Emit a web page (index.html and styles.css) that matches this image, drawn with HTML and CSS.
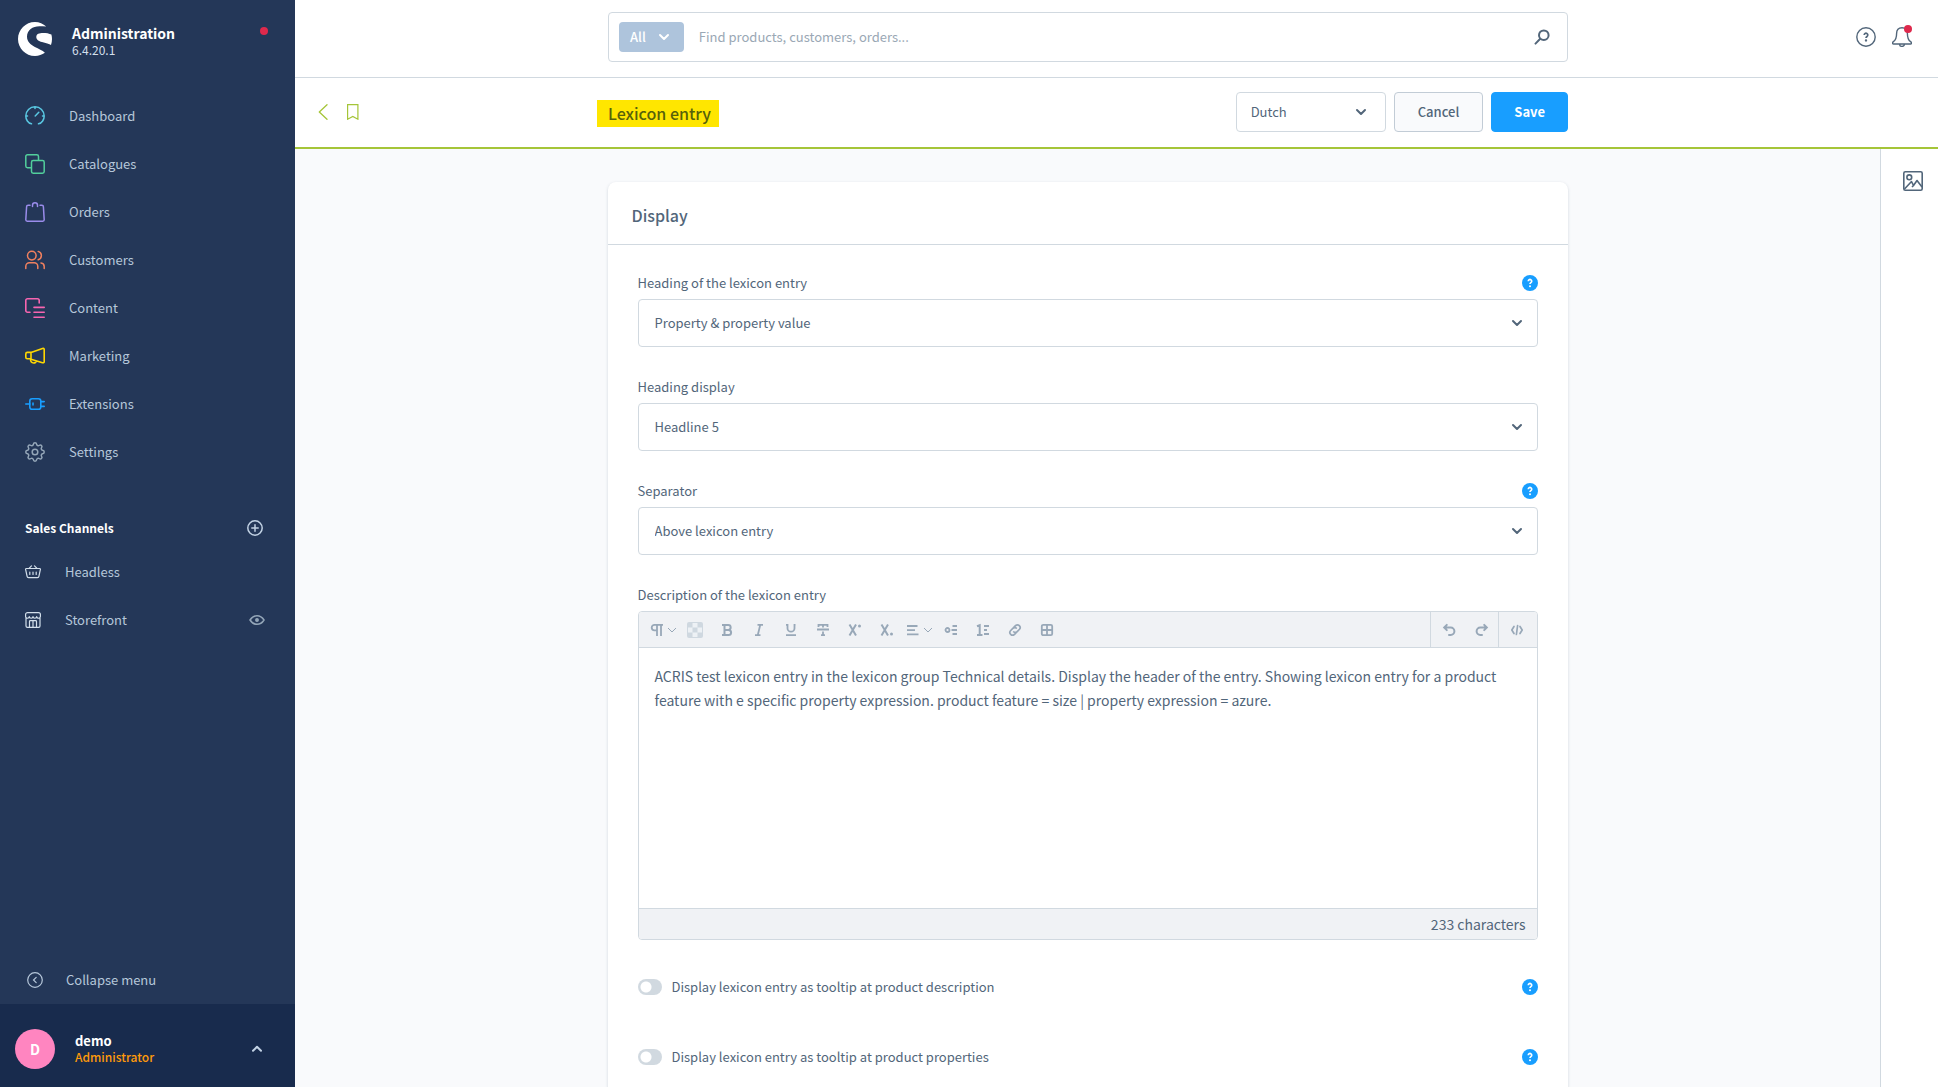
FILE: index.html
```html
<!DOCTYPE html>
<html lang="en">
<head>
<meta charset="utf-8">
<title>Lexicon entry | Administration</title>
<meta name="viewport" content="width=device-width, initial-scale=1">
<link rel="stylesheet" href="styles.css">
</head>
<body>
<svg class="sprite" aria-hidden="true">
  <symbol id="chevron" viewBox="0 0 16 16"><path d="M4 6l4 4 4-4" fill="none" stroke="currentColor" stroke-width="2" stroke-linecap="round" stroke-linejoin="round"/></symbol>
  <symbol id="chevron-thin" viewBox="0 0 10 16"><path d="M1 6l4 4 4-4" fill="none" stroke="currentColor" stroke-width="1"/></symbol>
  <symbol id="help" viewBox="0 0 16 16"><circle cx="8" cy="8" r="8" fill="#189eff"/><path d="M6.300 6.200a1.700 1.700 0 1 1 2.600 1.400c-.6.400-.9.600-.9 1.500" fill="none" stroke="#fff" stroke-width="1.700"/><circle cx="8" cy="11.200" r="1" fill="#fff"/></symbol>
</svg>
<div class="app">
  <aside class="sidebar">
    <header class="brand">
      <svg class="brand-logo" viewBox="0 0 34 34" fill="#fff"><path d="M28.200 4.600C25.300 1.800 21.300 0 17 0 7.600 0 0 7.600 0 17s7.600 17 17 17c3.700 0 7.100-1.200 9.900-3.200-2.300-2.700-6.500-4-10-5.900C12.500 22.700 9 20 9 14.600 9 8 14.500 4.300 21.500 4.200c2.400 0 4.700.1 6.700.4z"/><path d="M33 23.100c.7-1.900 1-4 1-6.100 0-1.600-.2-3-.6-4.400-2-1.300-5.400-1.700-8.300-1.700-3.800 0-6.800.9-6.800 4 0 2.700 2.400 4 5.700 5.100 3.500 1.100 7.600 2 9 3.100z"/></svg>
      <div class="brand-text">
        <strong class="brand-name">Administration</strong>
        <span class="brand-version">6.4.20.1</span>
      </div>
      <span class="brand-status"></span>
    </header>
    <nav class="nav" aria-label="Main">
      <a class="nav-item" href="#"><svg class="icon-20" viewBox="0 0 20 20" fill="none" stroke="#5ac8e2" stroke-width="1.500" stroke-linecap="round"><path d="M6.500 17.800C3 17.300.8 13.500.8 10a9.200 9.200 0 1 1 18.400 0c0 3.500-2.200 7.300-5.700 7.800M10 1v1.500M1 10h1.500M17.500 10H19M10.200 10l3.600-3.800"/></svg>Dashboard</a>
      <a class="nav-item" href="#"><svg class="icon-20" viewBox="0 0 20 20" fill="none" stroke="#52cf9c" stroke-width="1.500" stroke-linejoin="round"><path d="M13.500 6.500v-4A1.700 1.700 0 0 0 11.800.8H2.500A1.700 1.700 0 0 0 .8 2.500v9.600a1.700 1.700 0 0 0 1.700 1.700h4"/><rect x="6.500" y="6.500" width="12.700" height="12.700" rx="1.700"/></svg>Catalogues</a>
      <a class="nav-item" href="#"><svg class="icon-20" viewBox="0 0 20 20" fill="none" stroke="#9a8ceb" stroke-width="1.500" stroke-linecap="round" stroke-linejoin="round"><path d="M5 3.200H3.100c-.9 0-1.500.6-1.500 1.500L.8 17.800c0 .8.6 1.400 1.400 1.400h15.600c.8 0 1.400-.6 1.400-1.400l-.8-13.100c0-.9-.6-1.500-1.500-1.500H15M7.500 4.500V3.300a2.500 2.500 0 0 1 5 0v1.200"/></svg>Orders</a>
      <a class="nav-item" href="#"><svg class="icon-20" viewBox="0 0 20 20" fill="none" stroke="#f0805f" stroke-width="1.500" stroke-linecap="round"><circle cx="6.800" cy="5.600" r="4.300"/><path d="M.8 18.500v-2.100a3.600 3.600 0 0 1 3.600-3.600h4.800a3.600 3.600 0 0 1 3.600 3.600v2.100M13.200 1.400a4.300 4.300 0 0 1 0 8.300M16 12.900a3.600 3.600 0 0 1 3.200 3.500v2.100"/></svg>Customers</a>
      <a class="nav-item" href="#"><svg class="icon-20" viewBox="0 0 20 20" fill="none" stroke="#f765b0" stroke-width="1.600" stroke-linecap="round"><path d="M14.200 5V2.500A1.700 1.700 0 0 0 12.500.8h-10A1.700 1.700 0 0 0 .8 2.500v10a1.700 1.700 0 0 0 1.700 1.700H5M9 9.400h10.200M9 14.300h10.200M9 19.200h10.200"/></svg>Content</a>
      <a class="nav-item" href="#"><svg class="icon-20" viewBox="0 0 20 20" fill="none" stroke="#ffd700" stroke-width="1.600" stroke-linejoin="round"><path d="M6 6.400l11.500-3.900c1-.3 1.700.1 1.700 1v12.200c0 .9-.7 1.300-1.700 1L6 13.200M6 6.400H2.300c-.9 0-1.500.6-1.500 1.500v3.300c0 .9.600 1.500 1.500 1.500H6zM5.600 13c-.4 2.200.9 4 3 4 1.600 0 2.600-1 2.800-2.400"/></svg>Marketing</a>
      <a class="nav-item" href="#"><svg class="icon-20" viewBox="0 0 20 20" fill="none" stroke="#189eff" stroke-width="1.600" stroke-linecap="round"><rect x="4.800" y="4.800" width="11" height="10.400" rx="2.300"/><path d="M.8 10h4M8 9v2M15.800 7.600h3.400M15.800 12.400h3.400"/></svg>Extensions</a>
      <a class="nav-item" href="#"><svg class="icon-20" viewBox="0 0 20 20" fill="none" stroke="#94a6b8" stroke-width="1.500" stroke-linejoin="round"><circle cx="10" cy="10" r="2.800"/><path d="M8.300 2.500c.3-2.300 3.100-2.300 3.400 0 .3 1.100 1.500 1.600 2.400 1 1.900-1.300 3.700.5 2.400 2.400-.6.900-.1 2.100 1 2.400 2.300.3 2.300 3.100 0 3.400-1.100.3-1.600 1.500-1 2.400 1.300 1.900-.5 3.700-2.400 2.400-.9-.6-2.100-.1-2.400 1-.3 2.300-3.100 2.300-3.400 0-.3-1.100-1.500-1.600-2.400-1-1.900 1.300-3.700-.5-2.400-2.400.6-.9.100-2.100-1-2.400-2.300-.3-2.300-3.100 0-3.400 1.100-.3 1.600-1.500 1-2.400-1.300-1.900.5-3.700 2.400-2.400.9.600 2.100.1 2.400-1z"/></svg>Settings</a>
    </nav>
    <section class="channels">
      <div class="channels-head">
        <h2 class="channels-title">Sales Channels</h2>
        <button class="icon-button" aria-label="Add sales channel"><svg class="icon-16" viewBox="0 0 16 16" fill="none" stroke="#c2d2e4" stroke-width="1.500" stroke-linecap="round"><circle cx="8" cy="8" r="7.200"/><path d="M8 4.800v6.400M4.800 8h6.400"/></svg></button>
      </div>
      <a class="nav-item nav-item-small" href="#"><svg class="icon-16" viewBox="0 0 16 16" fill="none" stroke="#d3dfeb" stroke-width="1.200" stroke-linecap="round" stroke-linejoin="round"><path d="M1.300 4.500h13.400c.6 0 .8.400.7.900l-1.500 7c-.1.800-.7 1.300-1.500 1.300H3.600c-.8 0-1.400-.5-1.500-1.300l-1.500-7c-.1-.5.100-.9.700-.9zM4 4.300l2.500-2.500M12 4.300L9.500 1.800M4.800 8v2.500M8 8v2.500M11.200 8v2.500"/></svg>Headless</a>
      <a class="nav-item nav-item-small" href="#"><svg class="icon-16" viewBox="0 0 16 16" fill="none" stroke="#d3dfeb" stroke-width="1.200" stroke-linejoin="round"><path d="M1 6v8c0 .8.500 1.400 1.400 1.400h11.200c.9 0 1.400-.6 1.400-1.400V6M2.500.6h11c.9 0 1.900 1 1.900 2v1.900c0 2.300-3.700 2.300-3.700 0 0 2.300-3.700 2.300-3.700 0 0 2.300-3.700 2.300-3.700 0C4.300 6.800.6 6.800.6 4.500V2.600c0-1 1-2 1.900-2zM4.500 15V9.500c0-.5.300-.8.800-.8h5.400c.5 0 .8.300.8.800V15M8 8.700V15"/></svg>Storefront
        <svg class="icon-16 nav-eye" viewBox="0 0 16 16" fill="none" stroke="#94a6b8" stroke-width="1.500"><path d="M1 8c1.800-2.900 4.100-4.300 7-4.300S13.200 5.100 15 8c-1.800 2.900-4.100 4.300-7 4.300S2.800 10.900 1 8z"/><circle cx="8" cy="8" r="1.200" fill="#94a6b8"/></svg></a>
    </section>
    <button class="collapse"><svg class="icon-16" viewBox="0 0 16 16" fill="none" stroke="#b6c7da" stroke-width="1.200" stroke-linecap="round"><circle cx="8" cy="8" r="7.300"/><path d="M9.200 5.300L6.500 8l2.700 2.700"/></svg>Collapse menu</button>
    <button class="user">
      <span class="avatar">D</span>
      <span class="user-text"><span class="user-name">demo</span><span class="user-role">Administrator</span></span>
      <svg class="icon-16 user-chevron" viewBox="0 0 16 16"><path d="M4 9.800l4-4 4 4" fill="none" stroke="#c2d2e4" stroke-width="2" stroke-linecap="round" stroke-linejoin="round"/></svg>
    </button>
  </aside>

  <div class="page">
    <header class="topbar">
      <form class="search" role="search">
        <button class="search-type" type="button">All<svg class="icon-16"><use href="#chevron"/></svg></button>
        <input class="search-input" type="search" aria-label="Search" placeholder="Find products, customers, orders...">
        <button class="icon-button" type="submit" aria-label="Search"><svg class="icon-16" viewBox="0 0 16 16" fill="none" stroke="#52667a" stroke-width="2" stroke-linecap="round"><circle cx="9.800" cy="6.200" r="4.800"/><path d="M6.200 9.800L1.500 14.600"/></svg></button>
      </form>
      <div class="topbar-actions">
        <button class="icon-button" aria-label="Help"><svg class="icon-20" viewBox="0 0 20 20" fill="none" stroke="#52667a" stroke-width="1.400"><circle cx="10" cy="10" r="9.200"/><path d="M8.200 8a1.800 1.800 0 1 1 2.800 1.500c-.7.500-1 .8-1 1.600" stroke-width="1.700"/><circle cx="10" cy="13.400" r=".5"/></svg></button>
        <button class="icon-button bell" aria-label="Notifications"><svg class="icon-20" viewBox="0 0 20 20" fill="none" stroke="#52667a" stroke-width="1.400" stroke-linejoin="round"><path d="M10 .8c3.600 0 5.400 2.200 5.400 5.600 0 5 .9 6.700 3.200 8.200.6.400.9 1 .9 1.600 0 .5-.4.800-1 .8h-17c-.6 0-1-.3-1-.8 0-.6.300-1.200.9-1.600 2.300-1.500 3.200-3.200 3.200-8.200C4.600 3 6.400.8 10 .8zM7.600 17.200a2.400 2.200 0 0 0 4.800 0"/></svg><span class="bell-dot"></span></button>
      </div>
    </header>

    <div class="smartbar">
      <div class="smartbar-back">
        <a class="smartbar-link" href="#" aria-label="Back"><svg class="icon-16" viewBox="0 0 16 16" fill="none" stroke="#a5c538" stroke-width="1.300" stroke-linecap="round" stroke-linejoin="round"><path d="M12 .7L4.300 8l7.700 7.300"/></svg></a>
        <button class="icon-button" aria-label="Bookmark"><svg class="icon-16" viewBox="0 0 16 16" fill="none" stroke="#a5c538" stroke-width="1.200"><path d="M2.600.6h10.300v14.600l-5.100-2.800-5.200 2.800z"/></svg></button>
      </div>
      <div class="smartbar-main">
        <h1 class="smartbar-title">Lexicon entry</h1>
        <div class="select-wrap smartbar-language">
          <select class="select" aria-label="Language"><option>Dutch</option><option>English</option></select>
          <svg class="icon-16 select-chevron"><use href="#chevron"/></svg>
        </div>
        <button class="button">Cancel</button>
        <button class="button button-primary">Save</button>
      </div>
    </div>

    <div class="workspace">
      <main class="content">
        <section class="card">
          <h2 class="card-title">Display</h2>
          <div class="card-body">
            <div class="field">
              <div class="field-head"><label for="heading">Heading of the lexicon entry</label><svg class="icon-16"><use href="#help"/></svg></div>
              <div class="select-wrap">
                <select class="select select-large" id="heading"><option>Property &amp; property value</option></select>
                <svg class="icon-16 select-chevron"><use href="#chevron"/></svg>
              </div>
            </div>
            <div class="field">
              <div class="field-head"><label for="heading-display">Heading display</label></div>
              <div class="select-wrap">
                <select class="select select-large" id="heading-display"><option>Headline 5</option></select>
                <svg class="icon-16 select-chevron"><use href="#chevron"/></svg>
              </div>
            </div>
            <div class="field">
              <div class="field-head"><label for="separator">Separator</label><svg class="icon-16"><use href="#help"/></svg></div>
              <div class="select-wrap">
                <select class="select select-large" id="separator"><option>Above lexicon entry</option></select>
                <svg class="icon-16 select-chevron"><use href="#chevron"/></svg>
              </div>
            </div>
            <div class="field">
              <div class="field-head"><label for="description">Description of the lexicon entry</label></div>
              <div class="editor">
                <div class="toolbar" role="toolbar" aria-label="Formatting">
                  <div class="tools">
                    <button class="tool tool-menu" aria-label="Paragraph"><svg class="icon-16" viewBox="0 0 16 16" fill="none" stroke="currentColor" stroke-width="1.800"><path d="M14 2.800H5.500a2.800 2.800 0 0 0 0 5.600h2M8 2.800V14M12 2.800V14"/></svg><svg class="tool-chevron"><use href="#chevron-thin"/></svg></button>
                    <button class="tool" aria-label="Text color"><svg class="icon-16" viewBox="0 0 16 16"><rect width="16" height="16" rx="2" fill="#cfd8e0"/><path d="M5.500 1h5v4.500h-5zM1 5.500h4.500v5H1zM10.500 5.500H15v5h-4.500zM5.500 10.500h5V15h-5z" fill="#edf1f5"/></svg></button>
                    <button class="tool" aria-label="Bold"><svg class="icon-16" viewBox="0 0 16 16" fill="none" stroke="currentColor" stroke-width="2"><path d="M3 3h6.200a2.400 2.400 0 0 1 0 4.900H5M9.500 7.900a2.600 2.600 0 0 1 0 5.200H3M5.500 3v10"/></svg></button>
                    <button class="tool" aria-label="Italic"><svg class="icon-16" viewBox="0 0 16 16" fill="none" stroke="currentColor" stroke-width="1.800"><path d="M6.500 2.800H12M4 13.200h5.500M9.200 3L6.800 13"/></svg></button>
                    <button class="tool" aria-label="Underline"><svg class="icon-16" viewBox="0 0 16 16" fill="none" stroke="currentColor" stroke-width="1.800"><path d="M4.500 2v4.200a3.500 3.500 0 0 0 7 0V2M3 2.800h2.300M11 2.800h1.500M3 13.200h10"/></svg></button>
                    <button class="tool" aria-label="Strikethrough"><svg class="icon-16" viewBox="0 0 16 16" fill="none" stroke="currentColor" stroke-width="1.800"><path d="M3.500 5V2.800h9V5M8 2.800v2.700M2 7.500h12M8 9.500v4M6 13.200h4"/></svg></button>
                    <button class="tool" aria-label="Superscript"><svg class="icon-16" viewBox="0 0 16 16" fill="none" stroke="currentColor" stroke-width="2"><path d="M2.500 2.500l6.500 11M9 2.500l-6.500 11"/><circle cx="12.500" cy="4" r="1.500" fill="currentColor" stroke="none"/></svg></button>
                    <button class="tool" aria-label="Subscript"><svg class="icon-16" viewBox="0 0 16 16" fill="none" stroke="currentColor" stroke-width="2"><path d="M2.500 2.500l6.500 11M9 2.500l-6.500 11"/><circle cx="12.500" cy="12" r="1.500" fill="currentColor" stroke="none"/></svg></button>
                    <button class="tool tool-menu" aria-label="Alignment"><svg class="icon-16" viewBox="0 0 16 16" fill="none" stroke="currentColor" stroke-width="1.800"><path d="M2 4h10.500M2 8.200h8M2 12.400h11.500"/></svg><svg class="tool-chevron"><use href="#chevron-thin"/></svg></button>
                    <button class="tool" aria-label="Bulleted list"><svg class="icon-16" viewBox="0 0 16 16" fill="none" stroke="currentColor" stroke-width="1.800"><circle cx="4.500" cy="8" r="2"/><path d="M9.500 4H14M8.500 8H14M9.500 12H14"/></svg></button>
                    <button class="tool" aria-label="Numbered list"><svg class="icon-16" viewBox="0 0 16 16" fill="none" stroke="currentColor" stroke-width="2"><path d="M2 4.200l2.700-1V13M2 13h5.500M9 4h5M9 8h3M9 12h5"/></svg></button>
                    <button class="tool" aria-label="Link"><svg class="icon-16" viewBox="0 0 16 16" fill="none" stroke="currentColor" stroke-width="1.700" stroke-linecap="round"><path d="M7 5.200l1.700-1.700a2.700 2.700 0 0 1 3.800 3.800l-2.300 2.300a2.700 2.700 0 0 1-3.500.3M9 10.800l-1.700 1.700a2.700 2.700 0 0 1-3.800-3.800l2.300-2.300a2.700 2.700 0 0 1 3.500-.3"/></svg></button>
                    <button class="tool" aria-label="Table"><svg class="icon-16" viewBox="0 0 16 16" fill="none" stroke="currentColor" stroke-width="1.800"><rect x="2.800" y="2.800" width="10.400" height="10.400" rx="1.500"/><path d="M8 3v10M3 8h10"/></svg></button>
                  </div>
                  <div class="tool-group">
                    <button class="tool" aria-label="Undo"><svg class="icon-16" viewBox="0 0 16 16" fill="none" stroke="currentColor" stroke-width="2" stroke-linecap="round"><path d="M3.500 5.500h6.200a3.700 3.700 0 0 1 0 7.400H8M5.800 2.900L3.200 5.500l2.600 2.600"/></svg></button>
                    <button class="tool" aria-label="Redo"><svg class="icon-16" viewBox="0 0 16 16" fill="none" stroke="currentColor" stroke-width="2" stroke-linecap="round"><path d="M12.500 5.500H6.300a3.700 3.700 0 0 0 0 7.400H8M10.200 2.900l2.600 2.600-2.600 2.600"/></svg></button>
                  </div>
                  <div class="tool-group tool-group-last">
                    <button class="tool" aria-label="Code"><svg class="icon-16" viewBox="0 0 16 16" fill="none" stroke="currentColor" stroke-width="1.700" stroke-linecap="round" stroke-linejoin="round"><path d="M5 4.500L2.800 8 5 11.500M11 4.500L13.200 8 11 11.500M8.600 3.500l-1.200 9"/></svg></button>
                  </div>
                </div>
                <textarea class="editor-text" id="description">ACRIS test lexicon entry in the lexicon group Technical details. Display the header of the entry. Showing lexicon entry for a product feature with e specific property expression. product feature = size | property expression = azure.</textarea>
                <div class="editor-foot">233 characters</div>
              </div>
            </div>
            <div class="switches">
              <div class="switch-row"><input class="switch" type="checkbox" id="tip-description"><label for="tip-description">Display lexicon entry as tooltip at product description</label><svg class="icon-16 switch-help"><use href="#help"/></svg></div>
              <div class="switch-row"><input class="switch" type="checkbox" id="tip-properties"><label for="tip-properties">Display lexicon entry as tooltip at product properties</label><svg class="icon-16 switch-help"><use href="#help"/></svg></div>
            </div>
          </div>
        </section>
      </main>
      <aside class="rail">
        <button class="icon-button" aria-label="Media"><svg class="icon-20" viewBox="0 0 20 20" fill="none" stroke="#52667a" stroke-width="1.600" stroke-linejoin="round"><rect x=".8" y=".8" width="18.400" height="18.400" rx="1.500"/><circle cx="6.300" cy="6.300" r="2.400"/><path d="M1.500 18l7-7.500 2 4 3.500-5 5 6.500M9 16l1.500-1.500"/></svg></button>
      </aside>
    </div>
  </div>
</div>
</body>
</html>
```
FILE: styles.css
```css
* { box-sizing: border-box; }

body {
  margin: 0;
  color: #52667a;
  font-family: "Noto Sans CJK SC", "Noto Sans", sans-serif;
  font-size: 13px;
  line-height: 16px;
}

button, input, select, textarea { font: inherit; color: inherit; }
button { border: 0; padding: 0; background: none; cursor: pointer; }
a { color: inherit; text-decoration: none; }
h1, h2 { margin: 0; }
svg { display: block; flex: none; }

.sprite { display: none; }
.icon-16 { width: 16px; height: 16px; }
.icon-20 { width: 20px; height: 20px; }
.icon-button { display: grid; place-items: center; }

.app {
  display: grid;
  grid-template-columns: 295px minmax(0, 1fr);
  height: 100vh;
}

/* Sidebar */
.sidebar {
  display: flex;
  flex-direction: column;
  min-height: 0;
  background: #243758;
  color: #b6c7da;
}
.brand {
  display: flex;
  align-items: flex-start;
  padding: 22px 27px 36px 18px;
}
.brand-logo { width: 34px; height: 34px; }
.brand-text {
  display: flex;
  flex-direction: column;
  flex: 1;
  padding-left: 20px;
}
.brand-name {
  color: #fff;
  font-size: 14px;
  line-height: 22px;
}
.brand-version {
  color: #d3dfeb;
  font-size: 12px;
  line-height: 12px;
}
.brand-status {
  width: 8px;
  height: 8px;
  margin-top: 5px;
  border-radius: 50%;
  background: #de294c;
}
.nav-item {
  display: flex;
  align-items: center;
  gap: 24px;
  height: 48px;
  padding: 0 30px 0 25px;
}
.nav-eye { margin-left: auto; }
.channels { padding-top: 36px; }
.channels-head {
  display: flex;
  align-items: center;
  justify-content: space-between;
  padding: 4px 32px 8px 25px;
}
.channels-title {
  color: #fff;
  font-size: 12px;
  line-height: 24px;
}
.collapse {
  display: flex;
  align-items: center;
  gap: 23px;
  height: 48px;
  margin-top: auto;
  padding: 0 27px;
}
.user {
  display: flex;
  align-items: center;
  height: 83px;
  padding: 7px 30px 0 15px;
  background: #182b4d;
  text-align: left;
}
.avatar {
  width: 40px;
  border-radius: 50%;
  background: #ff85c0;
  color: #fff;
  font-size: 14px;
  font-weight: 700;
  line-height: 40px;
  text-align: center;
}
.user-text {
  display: flex;
  flex-direction: column;
  flex: 1;
  padding-left: 20px;
  font-weight: 700;
}
.user-name { color: #fff; }
.user-role { color: #ff9a0a; font-size: 12px; font-weight: 500; }

/* Top bar and smart bar share the column grid of the content below */
.page {
  display: flex;
  flex-direction: column;
  min-width: 0;
  min-height: 0;
  background: #f9fafc;
}
.topbar, .smartbar {
  display: grid;
  grid-template-columns: 1fr minmax(0, 960px) 1fr 57px;
  align-items: center;
  background: #fff;
}
.topbar {
  padding: 12px 0 15px;
  border-bottom: 1px solid #d1d9e0;
}
.search {
  display: flex;
  grid-column: 2;
  align-items: center;
  height: 50px;
  padding: 0 17px 0 10px;
  border: 1px solid #d1d9e0;
  border-radius: 4px;
}
.search-type {
  display: flex;
  align-items: center;
  gap: 10px;
  height: 30px;
  padding: 0 12px 0 11px;
  border-radius: 4px;
  background: #aec4dc;
  color: #fff;
  font-weight: 500;
}
.search-input {
  flex: 1;
  padding: 0 15px;
  border: 0;
  outline: 0;
  font-size: 13px;
  line-height: 24px;
  appearance: none;
}
.search-input::placeholder { color: #9aa8b5; }
.topbar-actions {
  display: flex;
  grid-column: 3 / 5;
  gap: 16px;
  justify-content: flex-end;
  padding-right: 26px;
}
.bell { position: relative; }
.bell-dot {
  position: absolute;
  top: -2px;
  right: 0;
  width: 8px;
  height: 8px;
  border-radius: 50%;
  background: #de294c;
}
.smartbar {
  padding: 14px 0 15px;
  border-bottom: 2px solid #a5c538;
}
.smartbar-back {
  display: flex;
  gap: 14px;
  padding-left: 20px;
}
.smartbar-main {
  display: flex;
  gap: 8px;
  align-items: center;
}
.smartbar-title {
  margin: 3px auto 0 -11px;
  padding: 0 8px 0 11px;
  background: #ffe600;
  color: #56610b;
  font-size: 16px;
  font-weight: 500;
  line-height: 27px;
}
.smartbar-language { width: 150px; }

/* Form controls */
.select-wrap { display: grid; align-items: center; }
.select, .select-chevron { grid-area: 1 / 1; }
.select {
  width: 100%;
  height: 40px;
  padding: 0 40px 0 14px;
  border: 1px solid #d1d9e0;
  border-radius: 4px;
  background: #fff;
  appearance: none;
}
.select-large { height: 48px; padding-left: 16px; }
.select-chevron {
  justify-self: end;
  margin-right: 13px;
  pointer-events: none;
}
.smartbar-language .select-chevron { margin-right: 17px; }
.button {
  height: 40px;
  padding: 0 23px;
  border: 1px solid #c2ccd6;
  border-radius: 4px;
  background: #f9fafc;
  font-weight: 500;
}
.button-primary {
  padding: 0 22px;
  border-color: #189eff;
  background: #189eff;
  color: #fff;
  font-weight: 700;
}

/* Content */
.workspace {
  display: grid;
  grid-template-columns: minmax(0, 1fr) 58px;
  flex: 1;
  min-height: 0;
}
.content {
  overflow-y: auto;
  padding: 33px 0;
  scrollbar-width: none;
}
.rail {
  display: flex;
  justify-content: center;
  align-items: flex-start;
  padding-top: 22px;
  padding-left: 6px;
  border-left: 1px solid #d1d9e0;
  background: #fff;
}
.card {
  max-width: 960px;
  margin: 0 auto;
  border-radius: 8px;
  background: #fff;
  box-shadow: 0 1px 3px rgba(82, 102, 122, .25);
}
.card-title {
  padding: 21px 24px 17px;
  border-bottom: 1px solid #d1d9e0;
  font-size: 16px;
  font-weight: 500;
  line-height: 24px;
}
.card-body {
  display: flex;
  flex-direction: column;
  gap: 32px;
  padding: 30px;
}
.field {
  display: flex;
  flex-direction: column;
  gap: 8px;
}
.field-head {
  display: flex;
  justify-content: space-between;
  height: 16px;
}
.editor {
  display: flex;
  flex-direction: column;
  overflow: hidden;
  border: 1px solid #d1d9e0;
  border-radius: 4px;
}
.toolbar {
  display: flex;
  height: 36px;
  border-bottom: 1px solid #d1d9e0;
  background: #f0f2f5;
  color: #98a8b8;
}
.tools { display: flex; flex: 1; padding-left: 8px; }
.tool {
  display: flex;
  align-items: center;
  justify-content: center;
  width: 32px;
}
.tool-menu { gap: 2px; justify-content: flex-start; padding-left: 2px; }
.tool-chevron { width: 10px; height: 16px; }
.tool-group {
  display: flex;
  gap: 1px;
  padding-left: 2px;
  border-left: 1px solid #d1d9e0;
}
.tool-group-last { padding: 0 4px 0 2px; }
.editor-text {
  height: 260px;
  padding: 16px;
  border: 0;
  outline: 0;
  font-size: 14px;
  line-height: 24px;
  resize: none;
}
.editor-foot {
  padding: 3px 11px;
  border-top: 1px solid #d1d9e0;
  background: #f0f2f5;
  font-size: 14px;
  line-height: 24px;
  text-align: right;
}
.switches {
  display: flex;
  flex-direction: column;
  gap: 54px;
  padding-top: 7px;
}
.switch-row { display: flex; align-items: center; gap: 10px; }
.switch {
  width: 24px;
  height: 16px;
  margin: 0;
  border-radius: 8px;
  background: radial-gradient(circle at 8px 8px, #fff 5px, #d1d9e0 6px);
  appearance: none;
}
.switch-help { margin-left: auto; }
```
